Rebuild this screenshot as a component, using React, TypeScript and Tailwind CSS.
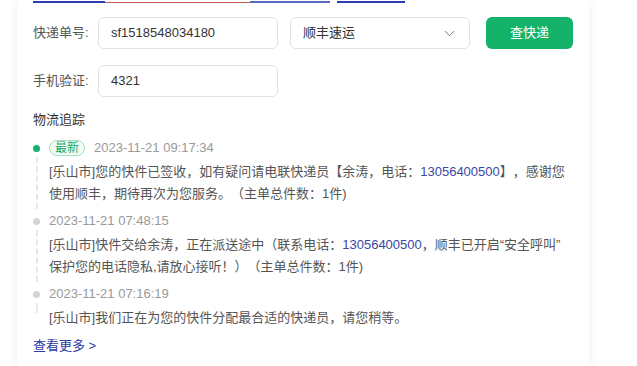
import React from "react";
import { ChevronDown } from "lucide-react";

const font = "font-['Liberation_Sans','Noto_Sans_CJK_SC',sans-serif] [text-spacing-trim:space-all]";

function Item({
  first,
  dotColor,
  date,
  lines,
  last,
}: {
  first?: boolean;
  dotColor: string;
  date: string;
  lines: React.ReactNode[];
  last?: boolean;
}) {
  return (
    <div className={`relative pl-4 ${last ? "" : "mb-[5px]"}`}>
      <span
        className="absolute left-0 top-[8px] h-[7px] w-[7px] rounded-full"
        style={{ backgroundColor: dotColor }}
      />
      <span
        className={`absolute left-[2.5px] top-[20px] border-l-2 border-dashed border-[#e8e8e8] ${last ? "bottom-[16px]" : "bottom-[-4px]"}`}
      />
      <div className="mb-[2px] flex h-[22px] items-center">
        {first && (
          <span className="mr-[9px] flex h-[16px] items-center rounded-full border border-[#a6dfbf] bg-[#f2fbf6] px-[5px] text-[12px] text-[#19a85f]">
            最新
          </span>
        )}
        <span className="text-[13px] text-[#9a9a9a]">{date}</span>
      </div>
      {lines.map((l, i) => (
        <div key={i} className="whitespace-nowrap text-[13px] leading-[22px] text-[#555]">
          {l}
        </div>
      ))}
    </div>
  );
}

const Phone = () => <span className="text-[#3848a6]">13056400500</span>;

export default function App() {
  return (
    <div className={`h-[366px] w-[637px] overflow-hidden bg-white ${font}`}>
      <div className="ml-[17px] h-[380px] w-[572px] bg-white px-4 shadow-[0_0_10px_rgba(0,0,0,0.07)]">
        <div className="flex h-[3px] items-end">
          <span className="h-[2px] w-[72px] bg-[#2b3fb0]" />
          <span className="h-[1px] w-[145px] bg-[#c65a55]" />
          <span className="h-[2px] w-[80px] bg-[#5a6ac0]" />
          <span className="w-[7px]" />
          <span className="h-[2px] w-[68px] bg-[#2b3fb0]" />
        </div>

        <div className="mt-[14px] flex items-center">
          <span className="w-[65px] text-[13px] text-[#555]">快递单号:</span>
          <div className="flex h-[32px] w-[180px] items-center rounded-[6px] border border-[#e1e1e1] px-3 text-[13px] text-[#333]">
            sf1518548034180
          </div>
          <div className="ml-[12px] flex h-[32px] w-[180px] items-center justify-between rounded-[6px] border border-[#e1e1e1] pl-3 pr-[11px] text-[13px] text-[#333]">
            <span>顺丰速运</span>
            <ChevronDown size={17} strokeWidth={1.4} color="#777" />
          </div>
          <button className="ml-[16px] flex h-[32px] w-[87px] items-center justify-center rounded-[6px] bg-[#15b36a] text-[13px] text-white">
            查快递
          </button>
        </div>

        <div className="mt-[16px] flex items-center">
          <span className="w-[65px] text-[13px] text-[#555]">手机验证:</span>
          <div className="flex h-[32px] w-[180px] items-center rounded-[6px] border border-[#e1e1e1] px-3 text-[13px] text-[#333]">
            4321
          </div>
        </div>

        <div className="mt-[12px] text-[13px] leading-[22px] text-[#333]">物流追踪</div>

        <div className="mt-[6px]">
          <Item
            first
            dotColor="#16b36a"
            date="2023-11-21 09:17:34"
            lines={[
              <>
                [乐山市]您的快件已签收，如有疑问请电联快递员【余涛，电话：<Phone />】，感谢您
              </>,
              <>使用顺丰，期待再次为您服务。（主单总件数：1件)</>,
            ]}
          />
          <Item
            dotColor="#d4d4d4"
            date="2023-11-21 07:48:15"
            lines={[
              <>
                [乐山市]快件交给余涛，正在派送途中（联系电话：<Phone />，顺丰已开启“安全呼叫”
              </>,
              <>保护您的电话隐私,请放心接听！）（主单总件数：1件)</>,
            ]}
          />
          <Item
            last
            dotColor="#d4d4d4"
            date="2023-11-21 07:16:19"
            lines={[<>[乐山市]我们正在为您的快件分配最合适的快递员，请您稍等。</>]}
          />
        </div>

        <div className="mt-[6px] text-[13px] leading-[22px] text-[#2d3a9e]">查看更多 &gt;</div>
      </div>
    </div>
  );
}
